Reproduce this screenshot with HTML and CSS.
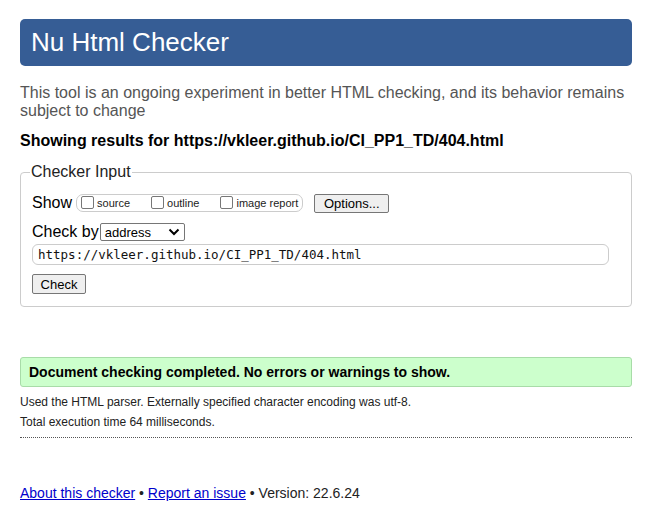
FILE: index.html
```html
<!DOCTYPE html>
<html>
<head>
<meta charset="utf-8">
<link rel="stylesheet" href="styles.css">
</head>
<body>
<div class="page">
  <h1 class="title">Nu Html Checker</h1>
  <p class="intro">This tool is an ongoing experiment in better HTML checking, and its behavior remains subject to change</p>
  <p class="showing">Showing results for https://vkleer.github.io/CI_PP1_TD/404.html</p>
  <fieldset class="input-box">
    <legend>Checker Input</legend>
    <div class="row">
      <span class="lbl">Show</span>
      <span class="opts">
        <label><span class="cb"></span>source</label>
        <label><span class="cb"></span>outline</label>
        <label><span class="cb"></span>image report</label>
      </span>
      <span class="btn opt-btn">Options...</span>
    </div>
    <div class="row row2">
      <span class="lbl">Check by</span>
      <span class="select">address<svg width="12" height="8" viewBox="0 0 12 8"><path d="M1.5 1.5 L6 6 L10.5 1.5" fill="none" stroke="#000" stroke-width="2"/></svg></span>
    </div>
    <div class="url">https://vkleer.github.io/CI_PP1_TD/404.html</div>
    <span class="btn check-btn">Check</span>
  </fieldset>
  <div class="success">Document checking completed. No errors or warnings to show.</div>
  <p class="meta">Used the HTML parser. Externally specified character encoding was utf-8.</p>
  <p class="meta meta2">Total execution time 64 milliseconds.</p>
  <div class="footer"><a href="#">About this checker</a> • <a href="#">Report an issue</a> • Version: 22.6.24</div>
</div>
</body>
</html>
```
FILE: styles.css
```css
html, body { margin: 0; padding: 0; background: #fff; }
body { font-family: "Liberation Sans", Arial, sans-serif; color: #000; }
.page { width: 612px; margin: 0 0 0 20px; padding-top: 19px; }
.title {
  margin: 0; height: 47px; box-sizing: border-box;
  background: #365d95; color: #fff; border-radius: 5px;
  font-weight: normal; font-size: 26px; line-height: 47px; padding-left: 11px;
}
.intro { margin: 18px 0 0; font-size: 16px; line-height: 18px; color: #555; }
.showing { margin: 12px 0 0; font-size: 16px; font-weight: bold; line-height: 18px; }
.input-box {
  margin: 13px 0 0; padding: 11px 11px 12px; border: 1px solid #ccc; border-radius: 4px;
}
.input-box legend { font-size: 16px; padding: 0 1px; margin-left: -2px; color: #222; }
.row { display: flex; align-items: center; height: 22px; }
.lbl { font-size: 16px; margin-right: 4px; }
.opts {
  display: flex; align-items: center; gap: 0; height: 18px; box-sizing: border-box;
  border: 1px solid #ccc; border-radius: 7px; padding: 0 4px 0 4px; font-size: 11px; color: #222;
}
.opts label { display: flex; align-items: center; margin-right: 21px; }
.opts label:last-child { margin-right: 0; }
.cb { width: 11px; height: 11px; border: 1px solid #777; border-radius: 2px; margin-right: 3px; margin-top: -2px; background: #fff; }
.btn {
  display: inline-flex; align-items: center; justify-content: center; box-sizing: border-box;
  background: #efefef; border: 1px solid #767676; border-radius: 2px; font-size: 13px; color: #000;
}
.opt-btn { margin-left: 11px; width: 75px; height: 19px; }
.row2 { margin-top: 7px; }
.row2 .lbl { margin-right: 1px; }
.select {
  display: inline-flex; align-items: center; justify-content: space-between; box-sizing: border-box;
  width: 85px; height: 18px; border: 1px solid #767676; border-radius: 2px; font-size: 13px; padding: 0 4px 0 4px;
}
.url {
  margin-top: 1px; width: 577px; height: 21px; box-sizing: border-box;
  border: 1px solid #ccc; border-radius: 6px; font-family: "DejaVu Sans Mono", "Liberation Mono", monospace;
  font-size: 12.5px; line-height: 19px; padding-left: 5px; color: #111;
}
.check-btn { margin-top: 9px; width: 54px; height: 20px; font-size: 13px; }
.success {
  margin-top: 50px; height: 30px; box-sizing: border-box; background: #ccffcc; border: 1px solid #a8dca8;
  border-radius: 3px; font-weight: bold; font-size: 14px; line-height: 28px; padding-left: 8px;
}
.meta { margin: 8px 0 0; font-size: 12px; line-height: 14px; color: #222; }
.meta2 { margin-top: 6px; padding-bottom: 8px; border-bottom: 1px dotted #555; }
.footer { margin-top: 47px; font-size: 14px; color: #222; }
.footer a { color: #0000cc; }
```
